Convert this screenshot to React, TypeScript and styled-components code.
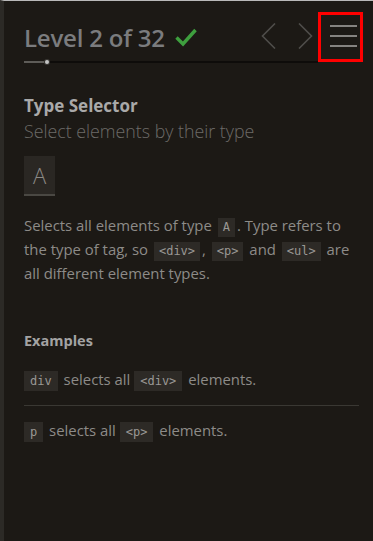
import React from "react";
import styled, { createGlobalStyle } from "styled-components";

const GlobalStyle = createGlobalStyle`
  html, body { margin: 0; padding: 0; background: #1c1915; }
  body { font-family: "Open Sans", "Noto Sans", sans-serif; }
  * { box-sizing: border-box; }
`;

const Sidebar = styled.div`
  min-height: 541px;
  border-left: 4px solid #2c2a26;
  border-top: 1px solid #b9b9b9;
  background: #1c1915;
  padding: 0 14px 0 20px;
`;

const Header = styled.div`
  display: grid;
  grid-template-columns: 1fr auto auto;
  grid-template-rows: 49px 2px;
  padding-top: 11px;
  margin-right: -4px;
`;

const Title = styled.h1`
  grid-column: 1;
  grid-row: 1;
  align-self: center;
  margin: 2px 0 0;
  display: flex;
  align-items: center;
  gap: 10px;
  font-size: 24px;
  font-weight: 600;
  color: #7b7c7e;
  line-height: 30px;
  letter-spacing: -0.2px;
`;

const Progress = styled.div`
  grid-column: 1 / 3;
  grid-row: 2;
  position: relative;
  height: 2px;
  background: #0e0c0a;
`;

const ProgressFill = styled.div`
  height: 2px;
  background: #5e5c58;
`;

const Dot = styled.span`
  position: absolute;
  top: -1px;
  width: 4px;
  height: 4px;
  border-radius: 50%;
  background: #c4c4c4;
  box-shadow: 0 0 0 1px #3c3a36;
`;

const Nav = styled.div`
  grid-column: 2;
  grid-row: 1;
  display: flex;
  align-items: center;
  gap: 22px;
  margin-right: 5px;
  padding-bottom: 2px;
`;

const ArrowButton = styled.button`
  background: none;
  border: 0;
  padding: 0;
  display: flex;
  align-items: center;
  justify-content: center;
  cursor: pointer;
`;

const MenuButton = styled.button`
  grid-column: 3;
  grid-row: 1 / 3;
  align-self: start;
  width: 45px;
  height: 50px;
  border: 3px solid #ff0000;
  background: none;
  padding: 0 0 2px 6px;
  display: flex;
  flex-direction: column;
  align-items: center;
  justify-content: center;
  gap: 8px;
  cursor: pointer;
`;

const MenuLine = styled.span`
  display: block;
  width: 27px;
  height: 2px;
  background: #858380;
`;

const Content = styled.div`
  padding-top: 31px;
`;

const LevelName = styled.h2`
  margin: 0;
  font-size: 17px;
  font-weight: 700;
  color: #a9a9a9;
  line-height: 24px;
`;

const Subtitle = styled.h3`
  margin: 1px 0 0;
  font-size: 17.8px;
  font-weight: 300;
  color: #6d6b68;
  line-height: 24px;
`;

const SelectorBox = styled.div`
  display: inline-flex;
  align-items: center;
  justify-content: center;
  margin-top: 13px;
  width: 31px;
  height: 40px;
  background: #2a2723;
  border-bottom: 2px solid #4a4843;
  color: #8c8a87;
  font-size: 22px;
  font-weight: 300;
`;

const Hint = styled.p`
  margin: 17px 0 0;
  font-size: 14.9px;
  line-height: 24px;
  color: #8d8b88;
`;

const Tag = styled.code`
  display: inline-block;
  font-family: "DejaVu Sans Mono", "Liberation Mono", monospace;
  font-size: 12px;
  line-height: 19px;
  padding: 0 5px;
  margin: 0 2px;
  background: #2d2a26;
  color: #9a9895;
`;

const ExamplesTitle = styled.h4`
  margin: 44px 0 2px;
  font-size: 14.5px;
  font-weight: 700;
  color: #a3a3a3;
  line-height: 24px;
`;

const Example = styled.div<{ $divider?: boolean }>`
  font-size: 14.9px;
  color: #8d8b88;
  line-height: 20px;
  padding: 14px 0;
  border-bottom: ${(p) => (p.$divider ? "1px solid #3a3833" : "none")};
`;

const ExampleTag = styled(Tag)`
  line-height: 20px;
  padding: 0 6px;
  margin: 0 2px 0 0;
`;

const Check = () => (
  <svg width="22" height="19" viewBox="0 0 22 19">
    <path d="M1.5 9.5 L8 16 L20.5 2" stroke="#3e9f3e" strokeWidth="3.4" fill="none" />
  </svg>
);

const Chevron = ({ dir }: { dir: "left" | "right" }) => (
  <svg width="15" height="26" viewBox="0 0 15 26">
    <path
      d={dir === "left" ? "M14 0.5 L1.5 13 L14 25.5" : "M1 0.5 L13.5 13 L1 25.5"}
      stroke="#4f4d4a"
      strokeWidth="1.6"
      fill="none"
    />
  </svg>
);

export default function App() {
  const progress = 23;
  return (
    <>
      <GlobalStyle />
      <Sidebar>
        <Header>
          <Title>
            Level 2 of 32 <Check />
          </Title>
          <Nav>
            <ArrowButton aria-label="previous">
              <Chevron dir="left" />
            </ArrowButton>
            <ArrowButton aria-label="next">
              <Chevron dir="right" />
            </ArrowButton>
          </Nav>
          <MenuButton aria-label="menu">
            <MenuLine />
            <MenuLine />
            <MenuLine />
          </MenuButton>
          <Progress>
            <ProgressFill style={{ width: `${progress - 3}px` }} />
            <Dot style={{ left: `${progress - 2}px` }} />
          </Progress>
        </Header>
        <Content>
          <LevelName>Type Selector</LevelName>
          <Subtitle>Select elements by their type</Subtitle>
          <SelectorBox>A</SelectorBox>
          <Hint>
            Selects all elements of type <Tag>A</Tag>. Type refers to the type of tag, so{" "}
            <Tag>&lt;div&gt;</Tag>, <Tag>&lt;p&gt;</Tag> and <Tag>&lt;ul&gt;</Tag> are all
            different element types.
          </Hint>
          <ExamplesTitle>Examples</ExamplesTitle>
          <Example $divider>
            <ExampleTag>div</ExampleTag> selects all <ExampleTag>&lt;div&gt;</ExampleTag> elements.
          </Example>
          <Example>
            <ExampleTag>p</ExampleTag> selects all <ExampleTag>&lt;p&gt;</ExampleTag> elements.
          </Example>
        </Content>
      </Sidebar>
    </>
  );
}
